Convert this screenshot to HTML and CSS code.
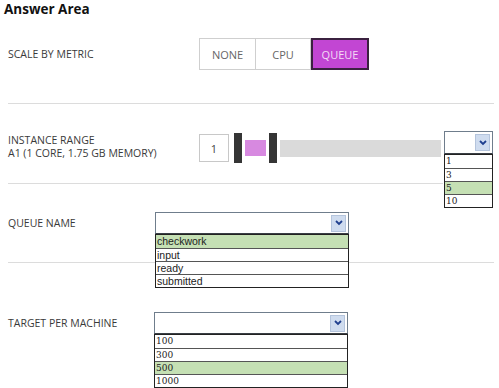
FILE: index.html
```html
<!DOCTYPE html>
<html lang="en">
<head>
    <meta charset="UTF-8">
    <title>Answer Area</title>
    <link rel="stylesheet" href="styles.css">
</head>
<body>
    <div class="page">
        <div class="title">Answer Area</div>

        <div class="row row-metric">
            <div class="label label-wide">SCALE BY METRIC</div>
            <div class="toggle">
                <span class="toggle-item">NONE</span>
                <span class="toggle-item">CPU</span>
                <span class="toggle-item active">QUEUE</span>
            </div>
        </div>
        <div class="divider"></div>

        <div class="row row-range">
            <div class="label label-wide label-two">
                <div>INSTANCE RANGE</div>
                <div>A1 (1 CORE, 1.75 GB MEMORY)</div>
            </div>
            <div class="slider">
                <div class="count">1</div>
                <div class="handle"></div>
                <div class="fill"></div>
                <div class="handle"></div>
                <div class="track"></div>
            </div>
            <div class="select select-small">
                <div class="select-box">
                    <span class="arrow"><svg width="8" height="6" viewBox="0 0 8 6"><path d="M1 1 L4 4 L7 1" fill="none" stroke="#1f3f8f" stroke-width="1.8"/></svg></span>
                </div>
                <ul class="options serif">
                    <li>1</li>
                    <li>3</li>
                    <li class="picked">5</li>
                    <li>10</li>
                </ul>
            </div>
        </div>
        <div class="divider divider-short"></div>

        <div class="row row-queue">
            <div class="label label-narrow">QUEUE NAME</div>
            <div class="select select-wide">
                <div class="select-box">
                    <span class="arrow"><svg width="8" height="6" viewBox="0 0 8 6"><path d="M1 1 L4 4 L7 1" fill="none" stroke="#1f3f8f" stroke-width="1.8"/></svg></span>
                </div>
                <ul class="options">
                    <li class="picked">checkwork</li>
                    <li>input</li>
                    <li>ready</li>
                    <li>submitted</li>
                </ul>
            </div>
        </div>
        <div class="divider"></div>

        <div class="row row-target">
            <div class="label label-target">TARGET PER MACHINE</div>
            <div class="select select-wide">
                <div class="select-box">
                    <span class="arrow"><svg width="8" height="6" viewBox="0 0 8 6"><path d="M1 1 L4 4 L7 1" fill="none" stroke="#1f3f8f" stroke-width="1.8"/></svg></span>
                </div>
                <ul class="options serif">
                    <li>100</li>
                    <li>300</li>
                    <li class="picked">500</li>
                    <li>1000</li>
                </ul>
            </div>
        </div>
    </div>
</body>
</html>
```

FILE: styles.css
```css
body {
    margin: 0;
    background: #fff;
    font-family: 'Open Sans', 'DejaVu Sans', sans-serif;
    color: #333;
}
.page {
    width: 499px;
    height: 388px;
    overflow: hidden;
}
.title {
    height: 20px;
    padding-left: 4px;
    font-size: 13.5px;
    font-weight: bold;
    line-height: 19px;
    color: #111;
}
.row {
    display: flex;
    margin-left: 8px;
}
.row-metric {
    align-items: center;
    padding: 18px 0 33px;
}
.row-range {
    align-items: flex-start;
    padding: 29px 0 20px;
}
.row-queue {
    align-items: center;
    padding: 28px 0 28px;
}
.row-target {
    align-items: center;
    padding-top: 49px;
}
.divider {
    height: 1px;
    margin: 0 5px 0 8px;
    background: #dcdcdc;
}
.divider-short {
    margin-right: 56px;
}
.label {
    flex-shrink: 0;
    font-size: 10.5px;
    color: #3a3a3a;
}
.label-wide {
    width: 191px;
}
.label-two {
    line-height: 13px;
    padding-top: 1px;
}
.label-narrow {
    width: 147px;
}
.label-target {
    width: 146px;
}

/* metric toggle */
.toggle {
    display: flex;
    height: 32px;
}
.toggle-item {
    box-sizing: border-box;
    display: flex;
    align-items: center;
    justify-content: center;
    width: 55px;
    border: 1px solid #cfcfcf;
    border-left-width: 0;
    font-size: 11px;
    color: #666;
}
.toggle-item:first-child {
    border-left-width: 1px;
    width: 57px;
}
.toggle-item.active {
    width: 58px;
    background: #c246d3;
    border: 2px solid #3b2140;
    color: #f4dcf6;
}

/* instance slider */
.slider {
    display: flex;
    align-items: center;
    flex-shrink: 0;
    height: 30px;
}
.count {
    width: 28px;
    height: 26px;
    border: 1px solid #c8c8c8;
    margin-right: 5px;
    display: flex;
    align-items: center;
    justify-content: center;
    font-size: 11px;
    color: #444;
}
.handle {
    width: 8px;
    height: 30px;
    background: #353535;
}
.fill {
    width: 21px;
    height: 16px;
    margin: 0 3px;
    background: #d789e0;
}
.track {
    width: 161px;
    height: 17px;
    margin-left: 3px;
    background: #dadada;
}

/* drop downs */
.select {
    position: relative;
    flex-shrink: 0;
}
.select-small {
    width: 49px;
    margin-left: 3px;
    margin-top: -2px;
}
.select-wide {
    width: 194px;
}
.select-box {
    height: 20px;
    border: 1px solid #6f7d8c;
    border-bottom-color: #3a3f45;
    background: #fff;
    display: flex;
    justify-content: flex-end;
    align-items: center;
    padding-right: 2px;
}
.select-small .select-box {
    height: 21px;
}
.arrow {
    width: 15px;
    height: 17px;
    background: #cfdcef;
    border: 1px solid #b4c4dc;
    box-sizing: border-box;
    display: flex;
    align-items: center;
    justify-content: center;
}
.options {
    position: absolute;
    left: 0;
    right: 0;
    top: 100%;
    margin: 0;
    padding: 0;
    list-style: none;
    border: 1px solid #222;
    background: #fff;
}
.options li {
    height: 12px;
    line-height: 12px;
    padding-left: 1px;
    font-family: 'Liberation Sans', 'Open Sans', sans-serif;
    font-size: 10.5px;
    color: #222;
    border-top: 1px solid #555;
}
.options li:first-child {
    border-top: 0;
    height: 13px;
}
.options.serif li {
    font-family: 'DejaVu Serif', 'Liberation Serif', serif;
    font-size: 9px;
}
.options li.picked {
    background: #c5e0b4;
}
```
